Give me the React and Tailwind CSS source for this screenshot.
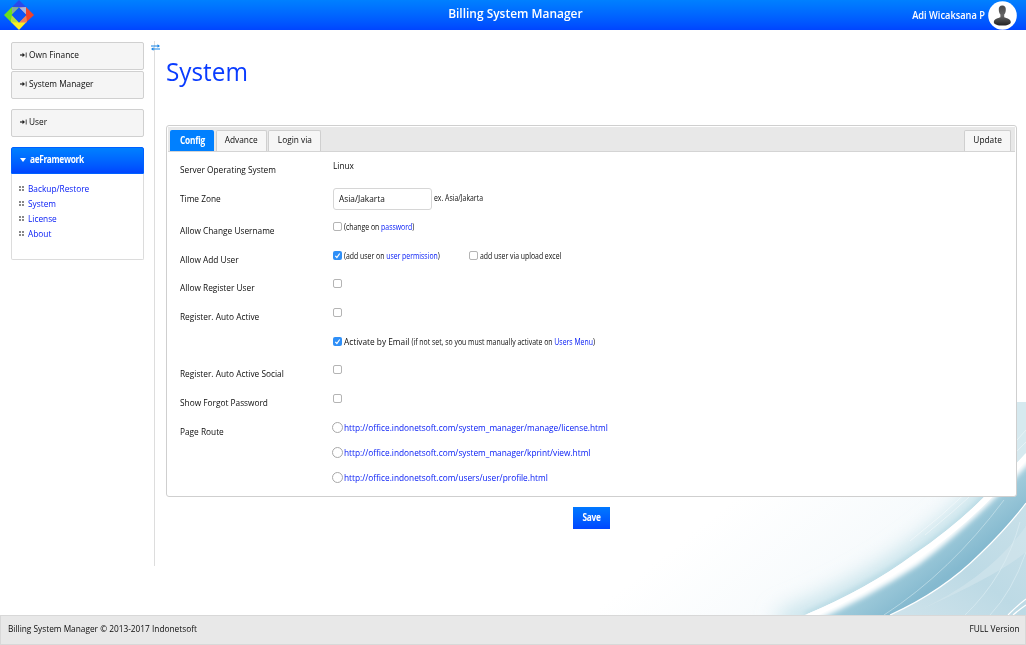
function Logo() {
  return (
    <svg className="size-[30px]" viewBox="0 0 30 30">
      <path d="M15 0 L22 7 L15 7.500 L8 7Z" fill="#2a49ea" />
      <path d="M8 7 L0 15 L7.500 22.500 L8 15 L15 7.500Z" fill="#6be01c" />
      <path d="M15 7.500 L8 14 L8 7Z" fill="#86a9a0" />
      <path d="M22 7 L30 15 L22 22.500 L22 15 L15 7.500Z" fill="#f0432b" />
      <path d="M15 7.500 L22 14.500 L22 7Z" fill="#a9b9e2" />
      <path d="M15 30 L7 22 L8 15 L15 22.500 L22 15.500 L22.500 22Z" fill="#fbee23" />
      <path d="M8 15 L15 22.500 L7.300 22.300Z" fill="#b9dd3c" />
      <path d="M22 15 L15 22.500 L22.500 22.500Z" fill="#ef7d5a" />
      <path d="M15 7.500 L22.300 15 L15 22.500 L7.700 15Z" fill="#0a55fa" />
    </svg>
  );
}

function Avatar() {
  return (
    <svg className="size-[29px]" viewBox="0 0 29 29">
      <defs>
        <linearGradient id="person" x1="0" y1="0" x2="0" y2="1">
          <stop offset="0" stopColor="#4a4a4a" />
          <stop offset="0.5" stopColor="#666" />
          <stop offset="1" stopColor="#222" />
        </linearGradient>
      </defs>
      <circle cx="14.500" cy="14.500" r="14.300" fill="#fff" />
      <path d="M14.300 4.600c2.500 0 3.700 1.800 3.500 4.300c-.1 2.200-.7 3.700-1.600 4.700v2.600c2.200 1 6.300 1.500 6.600 4.700c0 2.700-4.500 3.700-8.500 3.700s-8.500-1-8.500-3.700c.3-3.200 4.400-3.700 6.600-4.700v-2.600c-.9-1-1.500-2.500-1.600-4.700c-.2-2.500 1-4.300 3.500-4.300z" fill="url(#person)" />
    </svg>
  );
}

function Swoosh() {
  return (
    <svg className="absolute bottom-[30px] right-0 -z-10 h-[213px] w-[426px]" viewBox="0 0 426 213">
      <defs>
        <linearGradient id="band" gradientUnits="userSpaceOnUse" x1="330" y1="112" x2="366" y2="160">
          <stop offset="0" stopColor="#c9e2ea" />
          <stop offset="0.35" stopColor="#a3cddc" />
          <stop offset="1" stopColor="#84b9cf" />
        </linearGradient>
        <linearGradient id="corner" x1="0" y1="1" x2="0.9" y2="0">
          <stop offset="0" stopColor="#cfe3eb" />
          <stop offset="0.5" stopColor="#bddae5" />
          <stop offset="1" stopColor="#c8e0e9" />
        </linearGradient>
        <linearGradient id="haze" gradientUnits="userSpaceOnUse" x1="180" y1="60" x2="300" y2="210">
          <stop offset="0" stopColor="#ffffff" />
          <stop offset="0.7" stopColor="#f6fafc" />
          <stop offset="1" stopColor="#e9f4f7" />
        </linearGradient>
        <clipPath id="above">
          <path d="M0 0H426V51Q402 77 383 96Q366 113 347 128Q331 141 313 153Q290 170 263 185Q236 200 205 213H0Z" />
        </clipPath>
        <clipPath id="below">
          <path d="M426 51Q402 77 383 96Q366 113 347 128Q331 141 313 153Q290 170 263 185Q236 200 205 213H426Z" />
        </clipPath>
        <filter id="soft" x="-20%" y="-20%" width="140%" height="140%"><feGaussianBlur stdDeviation="11" /></filter>
        <filter id="soft2" x="-20%" y="-20%" width="140%" height="140%"><feGaussianBlur stdDeviation="2.500" /></filter>
      </defs>
      <g clipPath="url(#above)">
        <path d="M0 0H426V213H0Z" fill="url(#haze)" />
        <path d="M446 5Q402 77 383 96Q331 141 313 153Q263 190 180 222" fill="none" stroke="#bfdfe8" strokeWidth="20" filter="url(#soft)" />
        <path d="M426 51Q402 77 383 96Q366 113 347 128Q331 141 313 153Q263 187 205 213" fill="none" stroke="#b4d8e3" strokeWidth="4" filter="url(#soft2)" />
        <path d="M416 0H426V60L416 70Z" fill="#d6e9ef" />
        <path d="M426 40Q380 88 325 133M426 28Q375 88 310 139" fill="none" stroke="#fff" strokeOpacity=".6" strokeWidth=".7" />
      </g>
      <g clipPath="url(#below)">
        <path d="M426 51Q366 113 313 153Q263 187 205 213H426Z" fill="url(#band)" />
        <path d="M436 44Q366 119 313 158Q263 191 200 218" fill="none" stroke="#fff" strokeWidth="14" filter="url(#soft2)" />
        <path d="M426 52Q402 79 383 98Q366 115 347 130Q331 143 313 155Q263 189 207 213" fill="none" stroke="#fff" strokeWidth="9" />
        <path d="M284 213Q350 170 404 98" fill="none" stroke="#d8ebf1" strokeOpacity=".7" strokeWidth=".8" />
      </g>
      <path d="M290 213Q343 189 380 152Q408 125 426 101V213Z" fill="url(#corner)" />
      <path d="M320 208Q390 175 426 124V150Q400 172 320 208Z" fill="#d3e6ed" opacity=".6" />
      <path d="M365 213Q405 175 420 120M390 213Q412 190 426 150" fill="none" stroke="#dcecf2" strokeOpacity=".7" strokeWidth="1" />
      <path d="M408 213Q418 203 426 197M413 213Q420 207 426 203" fill="none" stroke="#fff" strokeWidth="1.200" />
      <path d="M290 213Q343 189 380 152Q408 125 426 101" fill="none" stroke="#fff" strokeWidth="1.200" />
    </svg>
  );
}

function Text({ children, className = "origin-left" }) {
  return <span className={`inline-block scale-x-[0.857] whitespace-pre ${className}`}>{children}</span>;
}

function Note({ children }) {
  return <span className="inline-block origin-left scale-x-[0.84] whitespace-pre text-[8.2px]">{children}</span>;
}

function MenuBox({ children, className = "" }) {
  return (
    <div className={`flex h-[28px] items-center rounded-[2px] border border-[#d0d0d0] bg-[#f5f5f5] pb-[3px] pl-[8px] ${className}`}>
      <svg className="mr-[2px] h-[6px] w-[7px]" viewBox="0 0 7 6">
        <path d="M0 3H4" stroke="#222" strokeWidth="1.200" />
        <path d="M2.500 .8L5 3L2.500 5.200Z" fill="#222" />
        <path d="M6.200 .5V5.500" stroke="#222" strokeWidth=".8" />
      </svg>
      <Text>{children}</Text>
    </div>
  );
}

function MenuLink({ children }) {
  return (
    <li className="flex h-[15px] items-center text-[#0018f5]">
      <span className="mr-[4px] grid grid-cols-2 gap-[1px]">
        <i className="size-[2px] bg-[#888]" /><i className="size-[2px] bg-[#888]" />
        <i className="size-[2px] bg-[#888]" /><i className="size-[2px] bg-[#888]" />
      </span>
      <Text>{children}</Text>
    </li>
  );
}

function Check({ on }) {
  return on ? (
    <svg className="mr-[2px] size-[9px] shrink-0" viewBox="0 0 9 9">
      <rect width="9" height="9" rx="2" fill="#2f8ff7" />
      <path d="M2.300 4.800L3.900 6.500L6.700 2.500" fill="none" stroke="#fff" strokeWidth="1.200" />
    </svg>
  ) : (
    <span className="mr-[2px] size-[9px] shrink-0 rounded-[2px] border border-[#b4b4b4] bg-white" />
  );
}

function Row({ label, h, lt, children }) {
  return (
    <div className={`flex ${h}`}>
      <div className={`w-[153px] shrink-0 leading-[28px] ${lt}`}><Text>{label}</Text></div>
      <div className="flex h-[27px] items-center">{children}</div>
    </div>
  );
}

function Link({ children }) {
  return <a className="text-[#0018f5]">{children}</a>;
}

function Route({ children }) {
  return (
    <div className="flex h-[25px] items-center">
      <span className="-ml-[1px] mr-[1px] size-[11px] rounded-full border border-[#a8a8a8] bg-white" />
      <Text><Link>{children}</Link></Text>
    </div>
  );
}

function Tab({ children, w }) {
  return (
    <div className={`flex h-[21px] justify-center rounded-t-[2px] border border-b-0 border-[#cfcfcf] bg-[#f6f6f6] leading-[18px] ${w}`}>
      <Text className="origin-center">{children}</Text>
    </div>
  );
}

export default function App() {
  return (
    <div className="relative isolate flex h-[645px] w-[1026px] flex-col overflow-hidden bg-white font-['Open_Sans','Noto_Sans',sans-serif] text-[9.7px] leading-[15px] text-[#0c0c0c]">
      <Swoosh />
      <header className="grid h-[30px] shrink-0 grid-cols-3 items-center bg-linear-to-b from-[#0080ff] to-[#0045ff] font-semibold text-white">
        <div className="pl-[4px]"><Logo /></div>
        <div className="pb-[3px] pl-[5px] text-center text-[12.5px] leading-[19px]"><span className="inline-block scale-x-[0.955]">Billing System Manager</span></div>
        <div className="flex items-center justify-end gap-[3px] pr-[9px]">
          <span className="inline-block origin-right scale-x-[0.91] text-[10.2px]">Adi Wicaksana P</span>
          <Avatar />
        </div>
      </header>

      <main className="flex min-h-0 flex-1">
        <aside className="ml-[10.5px] w-[133px] pt-[12px]">
          <MenuBox>Own Finance</MenuBox>
          <MenuBox className="mt-[1px]">System Manager</MenuBox>
          <MenuBox className="mt-[10px]">User</MenuBox>
          <div className="mt-[10px] flex h-[27px] items-center rounded-t-[2px] border border-[#0060ff] bg-linear-to-b from-[#0080ff] to-[#0045ff] pb-[2px] pl-[8px] font-bold text-white">
            <span className="mr-[4px] border-x-[3px] border-t-[4px] border-x-transparent border-t-white" />
            <Text className="origin-left tracking-[-0.4px]">aeFramework</Text>
          </div>
          <ul className="h-[86px] rounded-b-[2px] border border-t-0 border-[#dcdcdc] bg-white pl-[7px] pt-[7px]">
            <MenuLink>Backup/Restore</MenuLink>
            <MenuLink>System</MenuLink>
            <MenuLink>License</MenuLink>
            <MenuLink>About</MenuLink>
          </ul>
        </aside>

        <div className="relative ml-[10.5px] mt-[11px] h-[525px] w-[1px] shrink-0 bg-[#dddddd]">
          <svg className="absolute -left-[3px] top-[3px] h-[7px] w-[9px]" viewBox="0 0 9 7">
            <path d="M0 2H7M2 5H9" stroke="#1683e6" strokeWidth="1.200" />
            <path d="M6.500 .2L9 2L6.500 3.700ZM2.500 3.300L0 5L2.500 6.800Z" fill="#1683e6" />
          </svg>
        </div>

        <section className="ml-[11px] w-[851px]">
          <h1 className="h-[95px] pt-[23px] text-[26px] leading-[36px] text-[#0a3cff]"><span className="inline-block origin-left scale-x-[0.935]">System</span></h1>
          <div className="h-[372px] rounded-[3px] border border-[#cfcfcf] bg-white p-[1px]">
            <div className="flex h-[25px] items-end gap-[1px] border-b border-[#d4d4d4] bg-[#e8e8e8] pl-[2px] pr-[4px]">
              <div className="mr-[1px] flex h-[21px] w-[44px] justify-center rounded-t-[2px] bg-[#0080ff] font-bold leading-[21px] text-white"><Text className="origin-center tracking-[-0.3px]">Config</Text></div>
              <Tab w="w-[51px]">Advance</Tab>
              <Tab w="w-[53px]">Login via</Tab>
              <Tab w="ml-auto w-[47px]">Update</Tab>
            </div>
            <div className="pl-[12px]">
              <Row label="Server Operating System" h="h-[32px]" lt="pt-[4px]"><Text>Linux</Text></Row>
              <Row label="Time Zone" h="h-[29px]" lt="pt-[1px]">
                <span className="mr-[2px] mt-[3px] flex h-[22px] w-[99px] items-center rounded-[3px] border border-[#d6d6d6] pb-[1px] pl-[5px]"><Text>Asia/Jakarta</Text></span>
                <Note>ex. Asia/Jakarta</Note>
              </Row>
              <Row label="Allow Change Username" h="h-[29px]" lt="pt-[4px]">
                <Check /><Note>(change on <Link>password</Link>)</Note>
              </Row>
              <Row label="Allow Add User" h="h-[28px]" lt="pt-[4px]">
                <Check on />
                <span className="flex w-[125px]"><Note>(add user on <Link>user permission</Link>)</Note></span>
                <Check /><Note>add user via upload excel</Note>
              </Row>
              <Row label="Allow Register User" h="h-[29px]" lt="pt-[4px]"><Check /></Row>
              <Row label="Register. Auto Active" h="h-[29px]" lt="pt-[4px]"><Check /></Row>
              <Row label="" h="h-[28px]" lt="">
                <Check on />
                <Text>Activate by Email <span className="text-[8.05px]">(if not set, so you must manually activate on <Link>Users Menu</Link>)</span></Text>
              </Row>
              <Row label="Register. Auto Active Social" h="h-[29px]" lt="pt-[4px]"><Check /></Row>
              <Row label="Show Forgot Password" h="h-[30px]" lt="pt-[4px]"><Check /></Row>
              <div className="flex">
                <div className="w-[153px] pt-[3px] leading-[28px]"><Text>Page Route</Text></div>
                <div>
                  <Route>http://office.indonetsoft.com/system_manager/manage/license.html</Route>
                  <Route>http://office.indonetsoft.com/system_manager/kprint/view.html</Route>
                  <Route>http://office.indonetsoft.com/users/user/profile.html</Route>
                </div>
              </div>
            </div>
          </div>
          <button className="mx-auto mt-[10px] flex h-[22px] w-[37px] items-center justify-center bg-linear-to-b from-[#0078ff] to-[#0045ff] pb-[2px] font-bold text-white"><Text className="origin-center tracking-[-0.3px]">Save</Text></button>
        </section>
      </main>

      <footer className="flex h-[30px] shrink-0 items-center justify-between border border-[#d8d8d8] bg-[#e8e8e8] pb-[3px] pl-[7px] pr-[5px]">
        <Text>Billing System Manager © 2013-2017 Indonetsoft</Text>
        <Text className="origin-right">FULL Version</Text>
      </footer>
    </div>
  );
}
